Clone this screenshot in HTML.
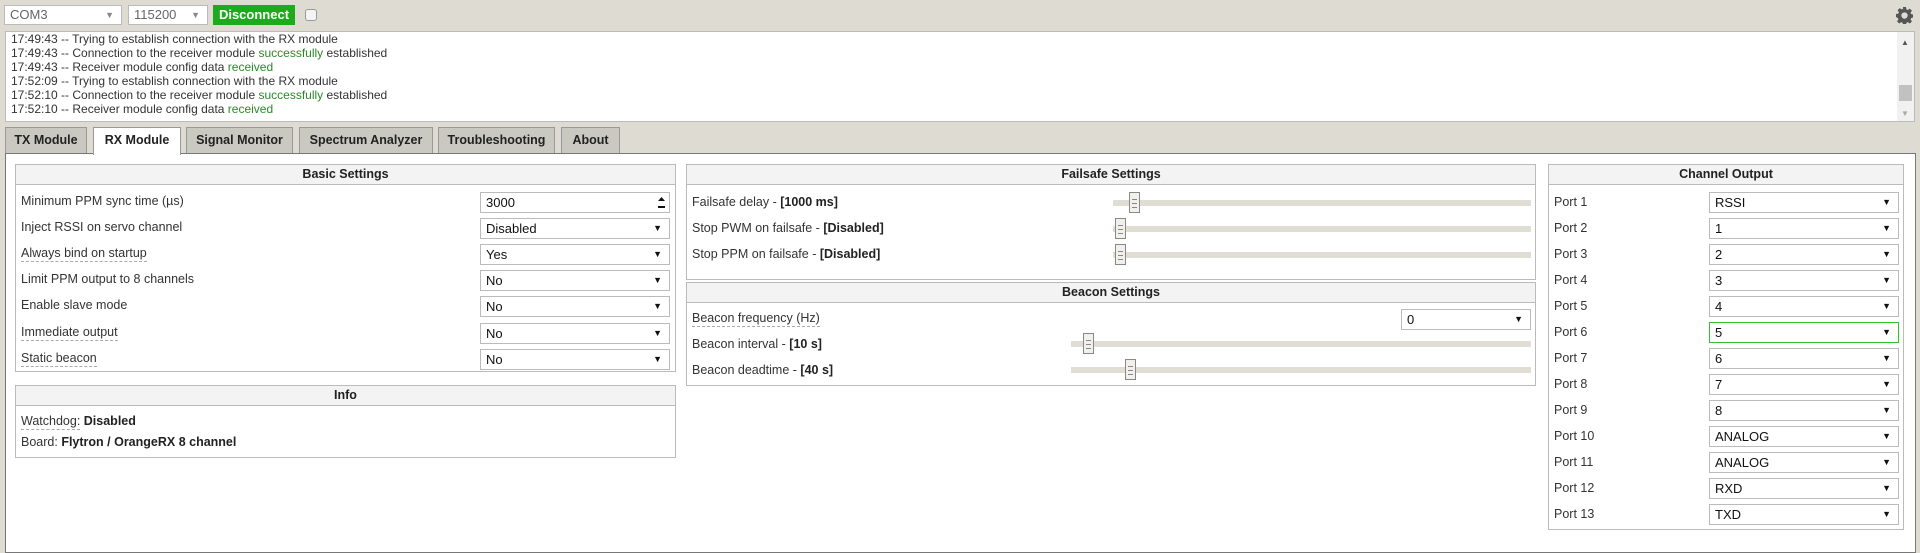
<!DOCTYPE html>
<html><head><meta charset="utf-8"><style>
*{box-sizing:border-box;margin:0;padding:0}
body{width:1920px;height:545px;background:#dedcd2;font-family:"Liberation Sans",Arial,sans-serif;font-size:12px;color:#333;position:relative;overflow:hidden}
.abs{position:absolute}
.sel{position:absolute;background:#fff;border:1px solid #bbb;height:21px;line-height:19px;padding-left:5px;font-size:13px;color:#111}
.sel:after{content:"\25BC";position:absolute;right:7px;top:0;font-size:9px;color:#111}
.sel.num:after{content:none}
.top .sel{color:#666;font-size:13px}
.top .sel:after{color:#888}
.log{left:5px;top:31px;width:1910px;height:91px;background:#fff;border:1px solid #bbb;padding:1px 5px;line-height:13.9px;font-size:12px}
.g{color:#2a8a2a}
.tab{position:absolute;top:127px;height:27px;background:#c9c9c1;border:1px solid #999;border-bottom:none;text-align:center;line-height:25px;font-weight:bold;font-size:12.5px;color:#222}
.tab.on{background:#fff;height:28px;z-index:2}
.content{left:5px;top:153px;width:1911px;height:400px;background:#fff;border:1px solid #777}
.panel{position:absolute;border:1px solid #bbb;background:#fff}
.ph{height:20px;background:#f3f3f3;border-bottom:1px solid #bbb;text-align:center;font-weight:bold;line-height:19px;font-size:12.5px;color:#222}
.row{position:absolute;left:5px;font-size:12.5px;height:20px;line-height:20px}
.dot{border-bottom:1px dashed #aaa;line-height:16px;display:inline-block}
.track{position:absolute;height:6px;background:#e0ddd5}
.thumb{position:absolute;width:11px;height:21px;background:#f2f0ec;border:1px solid #888;top:-8px}
.thumb:after{content:"";position:absolute;left:2px;top:6px;width:5px;height:7px;border-top:1px solid #888;border-bottom:1px solid #888;background:linear-gradient(#888,#888) 0 3px/5px 1px no-repeat}
b{color:#222}
</style></head><body>
<div class="top">
<div class="sel" style="left:4px;top:5px;width:118px;height:20px;line-height:18px">COM3</div>
<div class="sel" style="left:128px;top:5px;width:80px;height:20px;line-height:18px">115200</div>
</div>
<div class="abs" style="left:213px;top:5px;width:82px;height:20px;background:#1dab1d;color:#fff;font-weight:bold;font-size:13px;text-align:center;line-height:20px">Disconnect</div>
<div class="abs" style="left:305px;top:9px;width:12px;height:12px;border:1px solid #999;border-radius:3px;background:#f4f4f4"></div>
<svg class="abs" style="left:1896px;top:7px" width="17" height="17" viewBox="0 0 16 16"><path fill="#555" d="M6.6 0h2.8l.4 2.2 1.3.6 1.9-1.3 2 2-1.3 1.9.6 1.3 2.2.4v2.8l-2.2.4-.6 1.3 1.3 1.9-2 2-1.9-1.3-1.3.6-.4 2.2H6.6l-.4-2.2-1.3-.6-1.9 1.3-2-2 1.3-1.9-.6-1.3L0 9.4V6.6l2.2-.4.6-1.3-1.3-1.9 2-2 1.9 1.3 1.3-.6zM8 5a3 3 0 100 6 3 3 0 000-6z"/></svg>
<div class="abs log">
17:49:43 -- Trying to establish connection with the RX module<br>
17:49:43 -- Connection to the receiver module <span class="g">successfully</span> established<br>
17:49:43 -- Receiver module config data <span class="g">received</span><br>
17:52:09 -- Trying to establish connection with the RX module<br>
17:52:10 -- Connection to the receiver module <span class="g">successfully</span> established<br>
17:52:10 -- Receiver module config data <span class="g">received</span>
<div class="abs" style="right:0;top:0;width:17px;height:89px;background:#f1f1f1"><div class="abs" style="left:4px;top:4px;font-size:8px;color:#555">&#9650;</div><div class="abs" style="left:2px;top:53px;width:13px;height:16px;background:#c1c1c1"></div><div class="abs" style="left:4px;top:75px;font-size:8px;color:#aaa">&#9660;</div></div>
</div>
<div class="tab" style="left:5px;width:82px">TX Module</div>
<div class="tab on" style="left:93px;width:88px">RX Module</div>
<div class="tab" style="left:186px;width:107px">Signal Monitor</div>
<div class="tab" style="left:299px;width:134px">Spectrum Analyzer</div>
<div class="tab" style="left:438px;width:117px">Troubleshooting</div>
<div class="tab" style="left:561px;width:59px">About</div>
<div class="abs content"></div>

<div class="panel" style="left:15px;top:164px;width:661px;height:208px">
<div class="ph">Basic Settings</div>
<div class="row" style="top:26px">Minimum PPM sync time (µs)</div>
<div class="row" style="top:52px">Inject RSSI on servo channel</div>
<div class="row" style="top:78px"><span class="dot">Always bind on startup</span></div>
<div class="row" style="top:104px">Limit PPM output to 8 channels</div>
<div class="row" style="top:130px">Enable slave mode</div>
<div class="row" style="top:157px"><span class="dot">Immediate output</span></div>
<div class="row" style="top:183px"><span class="dot">Static beacon</span></div>
<div class="sel num" style="left:464px;top:27px;width:190px">3000<svg class="abs" style="right:3px;top:3px" width="9" height="13" viewBox="0 0 9 13"><path d="M1 5L4.5 1 8 5z" fill="#111"/><rect x="1" y="10" width="7" height="2" fill="#111"/><rect x="0" y="0" width="1" height="13" fill="#ddd" transform="translate(-3 0)"/></svg></div>
<div class="sel" style="left:464px;top:53px;width:190px">Disabled</div>
<div class="sel" style="left:464px;top:79px;width:190px">Yes</div>
<div class="sel" style="left:464px;top:105px;width:190px">No</div>
<div class="sel" style="left:464px;top:131px;width:190px">No</div>
<div class="sel" style="left:464px;top:158px;width:190px">No</div>
<div class="sel" style="left:464px;top:184px;width:190px">No</div>
</div>

<div class="panel" style="left:15px;top:385px;width:661px;height:73px">
<div class="ph">Info</div>
<div class="row" style="top:25px"><span class="dot">Watchdog:</span> <b>Disabled</b></div>
<div class="row" style="top:46px">Board: <b>Flytron / OrangeRX 8 channel</b></div>
</div>

<div class="panel" style="left:686px;top:164px;width:850px;height:116px">
<div class="ph">Failsafe Settings</div>
<div class="row" style="top:27px">Failsafe delay - <b>[1000 ms]</b></div>
<div class="row" style="top:53px">Stop PWM on failsafe - <b>[Disabled]</b></div>
<div class="row" style="top:79px">Stop PPM on failsafe - <b>[Disabled]</b></div>
<div class="track" style="left:426px;top:35px;width:418px"><div class="thumb" style="left:16px"></div></div>
<div class="track" style="left:426px;top:61px;width:418px"><div class="thumb" style="left:2px"></div></div>
<div class="track" style="left:426px;top:87px;width:418px"><div class="thumb" style="left:2px"></div></div>
</div>

<div class="panel" style="left:686px;top:282px;width:850px;height:104px">
<div class="ph">Beacon Settings</div>
<div class="row" style="top:25px"><span class="dot">Beacon frequency (Hz)</span></div>
<div class="row" style="top:51px">Beacon interval - <b>[10 s]</b></div>
<div class="row" style="top:77px">Beacon deadtime - <b>[40 s]</b></div>
<div class="sel" style="left:714px;top:26px;width:130px">0</div>
<div class="track" style="left:384px;top:58px;width:460px"><div class="thumb" style="left:12px"></div></div>
<div class="track" style="left:384px;top:84px;width:460px"><div class="thumb" style="left:54px"></div></div>
</div>

<div class="panel" style="left:1548px;top:164px;width:356px;height:366px">
<div class="ph">Channel Output</div>
<div class="row" style="top:27px">Port 1</div><div class="sel" style="left:160px;top:27px;width:190px">RSSI</div>
<div class="row" style="top:53px">Port 2</div><div class="sel" style="left:160px;top:53px;width:190px">1</div>
<div class="row" style="top:79px">Port 3</div><div class="sel" style="left:160px;top:79px;width:190px">2</div>
<div class="row" style="top:105px">Port 4</div><div class="sel" style="left:160px;top:105px;width:190px">3</div>
<div class="row" style="top:131px">Port 5</div><div class="sel" style="left:160px;top:131px;width:190px">4</div>
<div class="row" style="top:157px">Port 6</div><div class="sel" style="left:160px;top:157px;width:190px;border-color:#2ec42e">5</div>
<div class="row" style="top:183px">Port 7</div><div class="sel" style="left:160px;top:183px;width:190px">6</div>
<div class="row" style="top:209px">Port 8</div><div class="sel" style="left:160px;top:209px;width:190px">7</div>
<div class="row" style="top:235px">Port 9</div><div class="sel" style="left:160px;top:235px;width:190px">8</div>
<div class="row" style="top:261px">Port 10</div><div class="sel" style="left:160px;top:261px;width:190px">ANALOG</div>
<div class="row" style="top:287px">Port 11</div><div class="sel" style="left:160px;top:287px;width:190px">ANALOG</div>
<div class="row" style="top:313px">Port 12</div><div class="sel" style="left:160px;top:313px;width:190px">RXD</div>
<div class="row" style="top:339px">Port 13</div><div class="sel" style="left:160px;top:339px;width:190px">TXD</div>
</div>
</body></html>
